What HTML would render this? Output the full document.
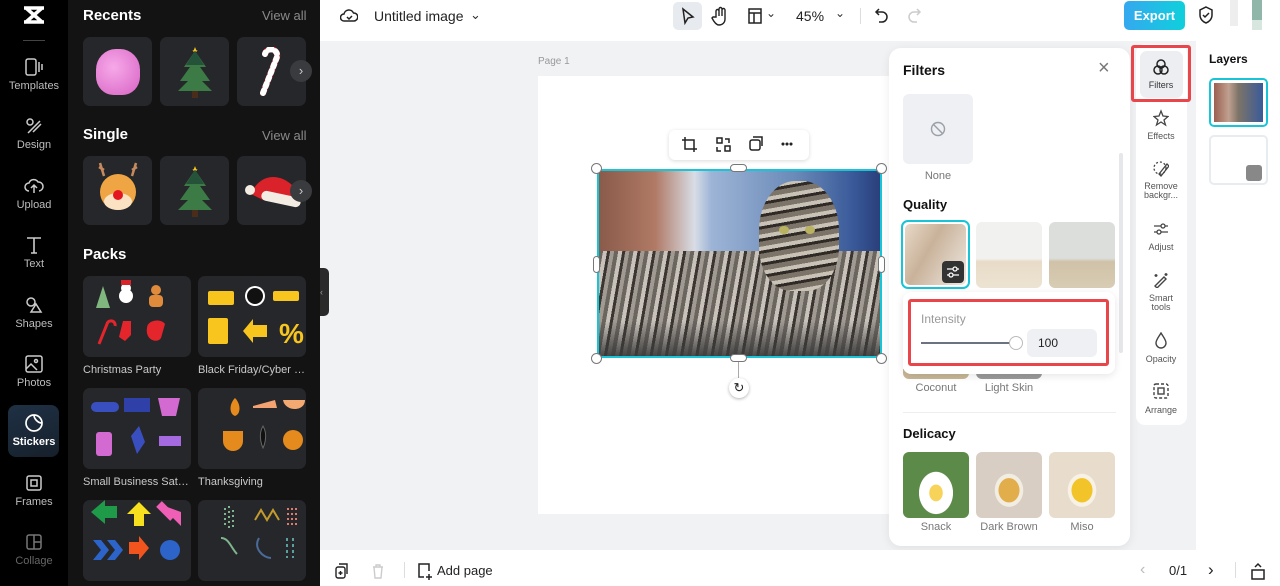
<!DOCTYPE html>
<html><head><meta charset="utf-8"><style>
*{box-sizing:border-box;margin:0;padding:0}
body{width:1280px;height:586px;overflow:hidden;position:relative;font-family:"Liberation Sans",sans-serif;background:#f1f2f4}
.a{position:absolute}
.rail{left:0;top:0;width:68px;height:586px;background:#000}
.ri{position:absolute;left:0;width:68px;text-align:center;color:#bdbdbd;font-size:11px}
.ri svg{display:block;margin:0 auto 3px}
.panel{left:68px;top:0;width:252px;height:586px;background:#131314}
.h{color:#fff;font-weight:bold;font-size:15px}
.va{color:#8a8a8a;font-size:13px}
.card{position:absolute;background:#26272a;border-radius:7px}
.lbl{position:absolute;color:#c9c9c9;font-size:11px;white-space:nowrap;width:108px;overflow:hidden;text-overflow:ellipsis}
.nb{position:absolute;width:22px;height:22px;border-radius:50%;background:#3a3b3e;color:#ccc;font-size:13px;text-align:center;line-height:21px}
.top{left:320px;top:0;width:960px;height:41px;background:#fff}
.bot{left:320px;top:550px;width:960px;height:36px;background:#fff}
.tl{position:absolute;font-size:11px;color:#555;text-align:center;width:50px}
</style></head><body>
<div class="a rail">
 <svg class="a" style="left:22px;top:5px" width="24" height="20" viewBox="0 0 24 20"><path d="M2 3h20M2 17h20M4 3l16 14M20 3L4 17" stroke="#fff" stroke-width="3.5" fill="none"/></svg>
 <div class="a" style="left:23px;top:40px;width:22px;height:1px;background:#444"></div>
 <div class="ri" style="top:57px"><svg width="20" height="20" viewBox="0 0 20 20" fill="none" stroke="#ccc" stroke-width="1.5"><rect x="2" y="2" width="10" height="16" rx="2"/><path d="M15 5v10M18 7v6"/></svg>Templates</div>
 <div class="ri" style="top:116px"><svg width="20" height="20" viewBox="0 0 20 20" fill="none" stroke="#ccc" stroke-width="1.5"><circle cx="6" cy="6" r="3"/><path d="M4 17l12-12M9 16l8-8"/></svg>Design</div>
 <div class="ri" style="top:176px"><svg width="20" height="20" viewBox="0 0 20 20" fill="none" stroke="#ccc" stroke-width="1.5"><path d="M5 15a4 4 0 010-8 5 5 0 019-1 4 4 0 011 9M10 10v7M7 12l3-3 3 3"/></svg>Upload</div>
 <div class="ri" style="top:235px"><svg width="20" height="20" viewBox="0 0 20 20" fill="none" stroke="#ccc" stroke-width="1.6"><path d="M3 3h14M10 3v15M7 18h6"/></svg>Text</div>
 <div class="ri" style="top:295px"><svg width="20" height="20" viewBox="0 0 20 20" fill="none" stroke="#ccc" stroke-width="1.5"><circle cx="7" cy="7" r="4"/><path d="M12 9l5 8H7z"/></svg>Shapes</div>
 <div class="ri" style="top:354px"><svg width="20" height="20" viewBox="0 0 20 20" fill="none" stroke="#ccc" stroke-width="1.5"><rect x="2" y="2" width="16" height="16" rx="2"/><circle cx="12" cy="7" r="1.5"/><path d="M2 15l5-5 6 6"/></svg>Photos</div>
 <div class="a" style="left:8px;top:405px;width:51px;height:52px;border-radius:8px;background:linear-gradient(160deg,#1f3145,#16202b)"></div>
 <div class="ri" style="top:413px;color:#fff;font-weight:bold"><svg width="20" height="20" viewBox="0 0 20 20" fill="none" stroke="#fff" stroke-width="1.7"><path d="M18 10a8 8 0 11-8-8c0 4 4 8 8 8zM10 2a8 8 0 018 8"/></svg>Stickers</div>
 <div class="ri" style="top:473px"><svg width="20" height="20" viewBox="0 0 20 20" fill="none" stroke="#ccc" stroke-width="1.5"><rect x="3" y="3" width="14" height="14" rx="2"/><rect x="7" y="7" width="6" height="6"/></svg>Frames</div>
 <div class="ri" style="top:532px;color:#666"><svg width="20" height="20" viewBox="0 0 20 20" fill="none" stroke="#777" stroke-width="1.5"><rect x="3" y="3" width="14" height="14" rx="2"/><path d="M10 3v14M10 10h7"/></svg>Collage</div>
</div>
<div class="a panel">
 <div class="a h" style="left:15px;top:7px">Recents</div><div class="a va" style="left:194px;top:8px">View all</div>
 <div class="card" style="left:15px;top:37px;width:69px;height:69px"><div class="a" style="left:13px;top:12px;width:44px;height:46px;border-radius:45% 45% 40% 40%;background:radial-gradient(circle at 40% 40%,#f7a9e9,#d763c4)"></div></div>
 <div class="card" style="left:92px;top:37px;width:69px;height:69px"><svg class="a" style="left:18px;top:8px" width="34" height="54" viewBox="0 0 34 54"><polygon points="17,2 19,7 14,5 20,5 15,7" fill="#f7c51e"/><path d="M17 6L6 22h6L2 36h8L0 46h34l-10-10h8L22 22h6z" fill="#3d7b46"/><path d="M17 6L8 20h18z" fill="#24533a"/><rect x="14" y="46" width="6" height="7" fill="#4a2c1a"/></svg></div>
 <div class="card" style="left:169px;top:37px;width:69px;height:69px"><svg class="a" style="left:20px;top:10px" width="30" height="50" viewBox="0 0 30 50"><path d="M6 46L20 10a6 6 0 00-12-3" stroke="#e4252c" stroke-width="6" fill="none" stroke-linecap="round"/><path d="M6 46L20 10a6 6 0 00-12-3" stroke="#fff" stroke-width="6" fill="none" stroke-dasharray="3 4" stroke-linecap="round"/></svg></div>
 <div class="nb" style="left:222px;top:60px">›</div>
 <div class="a h" style="left:15px;top:126px">Single</div><div class="a va" style="left:194px;top:128px">View all</div>
 <div class="card" style="left:15px;top:156px;width:69px;height:69px"><div class="a" style="left:17px;top:18px;width:36px;height:36px;border-radius:50%;background:#f0a545"></div><div class="a" style="left:21px;top:37px;width:28px;height:17px;border-radius:50%;background:#fbe2c2"></div><div class="a" style="left:30px;top:34px;width:10px;height:10px;border-radius:50%;background:#e4161f"></div><svg class="a" style="left:13px;top:5px" width="44" height="16"><path d="M8 15L4 2M8 9l-5-3M36 15l4-13M36 9l5-3" stroke="#c68a5e" stroke-width="2.5" fill="none"/></svg></div>
 <div class="card" style="left:92px;top:156px;width:69px;height:69px"><svg class="a" style="left:18px;top:8px" width="34" height="54" viewBox="0 0 34 54"><polygon points="17,2 19,7 14,5 20,5 15,7" fill="#f7c51e"/><path d="M17 6L6 22h6L2 36h8L0 46h34l-10-10h8L22 22h6z" fill="#3d7b46"/><path d="M17 6L8 20h18z" fill="#24533a"/><rect x="14" y="46" width="6" height="7" fill="#4a2c1a"/></svg></div>
 <div class="card" style="left:169px;top:156px;width:69px;height:69px"><svg class="a" style="left:8px;top:14px" width="58" height="40"><path d="M6 24C14 4 34 2 48 16l6 14H18z" fill="#d9222a"/><rect x="16" y="24" width="40" height="10" rx="5" fill="#f3ece3" transform="rotate(12 36 29)"/><circle cx="5" cy="20" r="5" fill="#f3ece3"/></svg></div>
 <div class="nb" style="left:222px;top:180px">›</div>
 <div class="a h" style="left:15px;top:246px">Packs</div>
 <div class="card" style="left:15px;top:276px;width:108px;height:81px"></div>
 <div class="card" style="left:130px;top:276px;width:108px;height:81px"></div>
 <div class="card" style="left:15px;top:388px;width:108px;height:81px"></div>
 <div class="card" style="left:130px;top:388px;width:108px;height:81px"></div>
 <div class="card" style="left:15px;top:500px;width:108px;height:81px"></div>
 <div class="card" style="left:130px;top:500px;width:108px;height:81px"></div>
 <svg class="a" style="left:15px;top:276px" width="223" height="305">
  <g><polygon points="20,10 13,32 27,32" fill="#7fb77e"/><circle cx="43" cy="20" r="7" fill="#fff"/><circle cx="43" cy="12" r="5" fill="#fff"/><rect x="38" y="4" width="10" height="5" fill="#d9222a"/><circle cx="73" cy="14" r="5" fill="#e08a3c"/><rect x="66" y="19" width="14" height="12" rx="4" fill="#e08a3c"/>
  <path d="M16 68l8-20a4 4 0 018 2" stroke="#e4252c" stroke-width="3" fill="none"/><path d="M40 45h8v14l-6 6-6-4z" fill="#e4252c"/><path d="M64 52c0-8 14-10 18-4l-4 14c-4 6-16 2-14-10z" fill="#e4252c"/></g>
  <g fill="#f7c51e"><rect x="125" y="15" width="26" height="14" rx="2"/><circle cx="172" cy="20" r="10" fill="#fff"/><circle cx="172" cy="20" r="8" fill="#111"/><rect x="190" y="15" width="26" height="10" rx="2"/><rect x="125" y="42" width="20" height="26" rx="2"/><path d="M160 55l10-12v6h14v12h-14v6z"/><text x="196" y="67" font-size="28" font-weight="bold" font-family="Liberation Sans">%</text></g>
  <g><rect x="8" y="126" width="28" height="10" rx="5" fill="#3a4fbf"/><rect x="41" y="122" width="26" height="14" fill="#2f40a8"/><path d="M75 122h22l-4 18H79z" fill="#d36ad1"/><rect x="13" y="156" width="16" height="24" rx="3" fill="#d36ad1"/><path d="M48 160l8-10 6 16-8 12z" fill="#3a4fbf"/><rect x="76" y="160" width="22" height="10" fill="#a66ae0"/></g>
  <g><path d="M152 122c-6 6-6 16 0 18 6-2 6-12 0-18z" fill="#e58a1c"/><path d="M170 130l22-6 2 8h-24z" fill="#f4a272"/><path d="M200 124h22c0 12-20 12-22 0z" fill="#f2a972"/><path d="M140 155h20v10a10 10 0 01-20 0z" fill="#e58a1c"/><path d="M180 150c-6 10 0 22 0 22s6-12 0-22z" fill="#111" stroke="#666"/><circle cx="210" cy="164" r="10" fill="#e58a1c"/></g>
  <g><path d="M8 236l14-12v6h12v12H22v6z" fill="#1f9a48"/><path d="M56 226l12 12h-7v12h-10v-12h-7z" fill="#f7e01e"/><path d="M76 228l22 22v-14" fill="#ef5fb6"/><path d="M76 228l14 14" stroke="#ef5fb6" stroke-width="8"/><path d="M10 264l8 10-8 10h8l8-10-8-10zM24 264l8 10-8 10h8l8-10-8-10z" fill="#2c64c9"/><path d="M46 266h10v-6l10 12-10 12v-6H46z" fill="#f2541d"/><circle cx="87" cy="274" r="10" fill="#2c64c9"/></g>
  <g stroke-width="2" fill="none"><path d="M142 232v20M146 230v22M150 234v18" stroke="#7fb48e" stroke-dasharray="2 3"/><path d="M172 244l6-10 6 10 6-10 6 10" stroke="#c49a2c"/><path d="M205 232v20M209 232v20M213 232v20" stroke="#e07a6a" stroke-dasharray="2 3"/><path d="M138 262c8 0 10 10 16 16" stroke="#7fb48e"/><path d="M176 262c-6 10 4 20 12 20" stroke="#4a6a9a"/><path d="M204 262v20M210 262v20" stroke="#5aa0a0" stroke-dasharray="3 3"/></g>
 </svg>
 <div class="lbl" style="left:15px;top:364px">Christmas Party</div>
 <div class="lbl" style="left:130px;top:364px">Black Friday/Cyber M...</div>
 <div class="lbl" style="left:15px;top:476px">Small Business Saturd...</div>
 <div class="lbl" style="left:130px;top:476px">Thanksgiving</div>
</div>
<div class="a" style="left:320px;top:268px;width:9px;height:48px;background:#2a2a2a;border-radius:0 5px 5px 0;color:#999;font-size:9px;line-height:48px">‹</div>
<div class="a top">
 <svg class="a" style="left:20px;top:7px" width="18" height="18" viewBox="0 0 18 18" fill="none" stroke="#222" stroke-width="1.5"><path d="M4 14a3.5 3.5 0 010-7 5 5 0 019.5-1 3.5 3.5 0 01.5 8z"/><path d="M7 10l2 2 3-3"/></svg>
 <div class="a" style="left:54px;top:8px;font-size:14px;color:#222">Untitled image</div>
 <div class="a" style="left:150px;top:7px;font-size:13px;color:#333">⌄</div>
 <div class="a" style="left:353px;top:2px;width:29px;height:28px;border-radius:5px;background:#e7eaee"></div>
 <svg class="a" style="left:359px;top:7px" width="16" height="18"><path d="M4 2l10 8-5 1-3 5z" fill="none" stroke="#222" stroke-width="1.5"/></svg>
 <svg class="a" style="left:391px;top:6px" width="18" height="20"><path d="M5 11V5a1.5 1.5 0 013 0v5V3a1.5 1.5 0 013 0v7V4a1.5 1.5 0 013 0v9c0 4-3 6-6 6s-5-3-7-7l1-1z" fill="none" stroke="#222" stroke-width="1.4"/></svg>
 <svg class="a" style="left:428px;top:8px" width="14" height="16"><rect x="1" y="1" width="12" height="14" fill="none" stroke="#222" stroke-width="1.5"/><path d="M1 5h12M6 5v10" stroke="#222" stroke-width="1.5"/></svg>
 <div class="a" style="left:446px;top:6px;font-size:12px;color:#333">⌄</div>
 <div class="a" style="left:476px;top:8px;font-size:14px;color:#222">45%</div>
 <div class="a" style="left:515px;top:6px;font-size:12px;color:#333">⌄</div>
 <div class="a" style="left:540px;top:8px;width:1px;height:16px;background:#ddd"></div>
 <svg class="a" style="left:554px;top:7px" width="16" height="18"><path d="M5 2L2 5l3 3M2 5h6a5 5 0 010 10H5" fill="none" stroke="#222" stroke-width="1.5"/></svg>
 <svg class="a" style="left:586px;top:7px" width="16" height="18"><path d="M11 2l3 3-3 3M14 5H8a5 5 0 000 10h3" fill="none" stroke="#ccc" stroke-width="1.5"/></svg>
 <div class="a" style="left:804px;top:1px;width:61px;height:29px;border-radius:5px;background:linear-gradient(90deg,#35a8ef,#0fd0dc);color:#fff;font-weight:bold;font-size:13px;text-align:center;line-height:29px">Export</div>
 <svg class="a" style="left:878px;top:6px" width="16" height="18"><path d="M8 1l6 3v5c0 4-3 7-6 8-3-1-6-4-6-8V4z M5 9l2 2 4-4" fill="none" stroke="#222" stroke-width="1.5"/></svg>
 <div class="a" style="left:910px;top:0;width:8px;height:26px;background:#eee"></div>
 <div class="a" style="left:932px;top:0;width:10px;height:20px;background:#8fb6a8"></div>
 <div class="a" style="left:932px;top:20px;width:10px;height:10px;background:#d8e6e0"></div>
</div>
<div class="a" style="left:538px;top:56px;font-size:10px;color:#999">Page 1</div>
<div class="a" style="left:538px;top:76px;width:360px;height:438px;background:#fff"></div>
<div class="a" style="left:669px;top:130px;width:140px;height:30px;background:#fff;border-radius:6px;box-shadow:0 1px 4px rgba(0,0,0,.15)"></div>
<svg class="a" style="left:681px;top:136px" width="120" height="18" fill="none" stroke="#222" stroke-width="1.5"><path d="M4 1v12h12M1 4h12v12"/><rect x="36" y="2" width="5" height="5"/><rect x="44" y="10" width="5" height="5"/><path d="M44 3h4v4M36 11v4h4"/><rect x="69" y="4" width="10" height="10" rx="2"/><path d="M72 1h9v9"/><circle cx="102" cy="8" r=".8" fill="#222"/><circle cx="106" cy="8" r=".8" fill="#222"/><circle cx="110" cy="8" r=".8" fill="#222"/></svg>
<div class="a" style="left:597px;top:169px;width:285px;height:189px;border:2px solid #19c4d6;overflow:hidden;background:linear-gradient(90deg,#8a5a4a 0%,#b07a65 20%,#d8dde6 34%,#9db4d6 40%,#6a8ab8 70%,#3a5a9a 90%,#2a3f7a 100%)">
 <div class="a" style="left:0;top:80px;width:285px;height:109px;background:repeating-linear-gradient(100deg,#6b6560 0 4px,#c8c2ba 4px 8px,#3a3530 8px 11px,#a09a92 11px 15px)"></div>
 <div class="a" style="left:0;top:150px;width:285px;height:39px;background:linear-gradient(#0000,#3b3b3b)"></div>
 <div class="a" style="left:160px;top:10px;width:80px;height:110px;border-radius:45% 45% 40% 40%;background:repeating-linear-gradient(170deg,#7c7468 0 5px,#c9c2b6 5px 9px,#2f2a25 9px 12px)"></div>
 <div class="a" style="left:180px;top:55px;width:10px;height:8px;border-radius:50%;background:#b9b260"></div>
 <div class="a" style="left:206px;top:55px;width:10px;height:8px;border-radius:50%;background:#b9b260"></div>
</div>
<div class="a" style="left:591px;top:163px;width:11px;height:11px;border-radius:50%;background:#fff;border:1px solid #777"></div>
<div class="a" style="left:876px;top:163px;width:11px;height:11px;border-radius:50%;background:#fff;border:1px solid #777"></div>
<div class="a" style="left:591px;top:353px;width:11px;height:11px;border-radius:50%;background:#fff;border:1px solid #777"></div>
<div class="a" style="left:876px;top:353px;width:11px;height:11px;border-radius:50%;background:#fff;border:1px solid #777"></div>
<div class="a" style="left:730px;top:164px;width:17px;height:8px;border-radius:4px;background:#fff;border:1px solid #777"></div>
<div class="a" style="left:730px;top:354px;width:17px;height:8px;border-radius:4px;background:#fff;border:1px solid #777"></div>
<div class="a" style="left:593px;top:256px;width:7px;height:17px;border-radius:4px;background:#fff;border:1px solid #777"></div>
<div class="a" style="left:878px;top:256px;width:7px;height:17px;border-radius:4px;background:#fff;border:1px solid #777"></div>
<div class="a" style="left:738px;top:362px;width:1px;height:16px;background:#aaa"></div>
<div class="a" style="left:729px;top:378px;width:20px;height:20px;border-radius:50%;background:#fff;box-shadow:0 1px 3px rgba(0,0,0,.3);text-align:center;font-size:13px;line-height:20px;color:#222">↻</div>

<div class="a" style="left:889px;top:48px;width:241px;height:498px;background:#fff;border-radius:12px;box-shadow:0 2px 10px rgba(0,0,0,.08);overflow:hidden">
 <div class="a" style="left:14px;top:14px;font-weight:bold;font-size:14px;color:#111">Filters</div>
 <div class="a" style="left:209px;top:9px;font-size:20px;color:#777;font-weight:300">×</div>
 <div class="a" style="left:14px;top:46px;width:70px;height:70px;border-radius:6px;background:#eef0f3"></div>
 <svg class="a" style="left:41px;top:73px" width="16" height="16"><circle cx="8" cy="8" r="6.5" fill="none" stroke="#9aa0a8" stroke-width="1.4"/><path d="M3.5 3.5l9 9" stroke="#9aa0a8" stroke-width="1.4"/></svg>
 <div class="a" style="left:14px;top:122px;width:70px;text-align:center;font-size:11px;color:#777">None</div>
 <div class="a" style="left:14px;top:149px;font-size:13px;color:#111;font-weight:bold">Quality</div>
 <div class="a" style="left:12px;top:172px;width:69px;height:69px;border:2px solid #19c4d6;border-radius:7px;padding:2px"><div style="width:100%;height:100%;border-radius:5px;background:linear-gradient(120deg,#e8d9c8,#c9b29a 40%,#efe9e2)"></div></div>
 <div class="a" style="left:53px;top:213px;width:22px;height:22px;border-radius:4px;background:#333"></div>
 <svg class="a" style="left:57px;top:217px" width="14" height="14" stroke="#fff" stroke-width="1.3" fill="none"><path d="M1 4h12M1 10h12"/><circle cx="9" cy="4" r="2" fill="#333"/><circle cx="5" cy="10" r="2" fill="#333"/></svg>
 <div class="a" style="left:87px;top:174px;width:66px;height:66px;border-radius:6px;background:linear-gradient(#f1f1ef 55%,#e8dcc8 60%,#ede3d2)"></div>
 <div class="a" style="left:160px;top:174px;width:66px;height:66px;border-radius:6px;background:linear-gradient(#dcdedc 55%,#cfc2a8 60%,#d8ccb4)"></div>
 <div class="a" style="left:230px;top:105px;width:4px;height:200px;border-radius:2px;background:#e5e7ea"></div>
 <div class="a" style="left:14px;top:321px;width:66px;height:10px;border-radius:0 0 6px 6px;background:#c8b796"></div>
 <div class="a" style="left:87px;top:321px;width:66px;height:10px;border-radius:0 0 6px 6px;background:#9a9a9a"></div>
 <div class="a" style="left:14px;top:334px;width:66px;text-align:center;font-size:11px;color:#777">Coconut</div>
 <div class="a" style="left:87px;top:334px;width:66px;text-align:center;font-size:11px;color:#777">Light Skin</div>
 <div class="a" style="left:14px;top:364px;width:213px;height:1px;background:#eceef0"></div>
 <div class="a" style="left:14px;top:378px;font-size:13px;color:#111;font-weight:bold">Delicacy</div>
 <div class="a" style="left:14px;top:404px;width:66px;height:66px;border-radius:6px;background:radial-gradient(ellipse at 50% 62%,#f7d35a 0 14%,#fff 15% 36%,#5c8a48 37%) ,#ddd"></div>
 <div class="a" style="left:87px;top:404px;width:66px;height:66px;border-radius:6px;background:radial-gradient(ellipse at 50% 58%,#e2ae4c 0 22%,#f2ede2 23% 30%,#d8cec4 31%)"></div>
 <div class="a" style="left:160px;top:404px;width:66px;height:66px;border-radius:6px;background:radial-gradient(ellipse at 50% 58%,#f2c42a 0 22%,#f7f2e5 23% 30%,#e8dccc 31%)"></div>
 <div class="a" style="left:14px;top:473px;width:66px;text-align:center;font-size:11px;color:#777">Snack</div>
 <div class="a" style="left:87px;top:473px;width:66px;text-align:center;font-size:11px;color:#777">Dark Brown</div>
 <div class="a" style="left:160px;top:473px;width:66px;text-align:center;font-size:11px;color:#777">Miso</div>
</div>
<div class="a" style="left:903px;top:292px;width:212px;height:82px;background:#fff;border-radius:8px;box-shadow:0 2px 8px rgba(0,0,0,.1)"></div>
<div class="a" style="left:908px;top:299px;width:201px;height:67px;border:3px solid #e8464a;border-radius:3px"></div>
<div class="a" style="left:921px;top:312px;font-size:12px;color:#999">Intensity</div>
<div class="a" style="left:921px;top:342px;width:95px;height:2px;background:#6b7280"></div>
<div class="a" style="left:1009px;top:336px;width:14px;height:14px;border-radius:50%;background:#fff;border:1px solid #bbb"></div>
<div class="a" style="left:1027px;top:329px;width:70px;height:28px;border-radius:6px;background:#eef0f3;font-size:12px;color:#222;line-height:28px;padding-left:11px">100</div>

<div class="a" style="left:1136px;top:44px;width:51px;height:381px;background:#fff;border-radius:9px"></div>
<div class="a" style="left:1140px;top:51px;width:43px;height:47px;border-radius:7px;background:#eceef1"></div>
<div class="a" style="left:1131px;top:45px;width:60px;height:57px;border:3px solid #e8464a;border-radius:3px"></div>
<svg class="a" style="left:1152px;top:58px" width="18" height="18" fill="none" stroke="#222" stroke-width="1.5"><circle cx="9" cy="6" r="4"/><circle cx="6" cy="12" r="4"/><circle cx="12" cy="12" r="4"/></svg>
<div class="tl" style="left:1136px;top:80px;color:#333;font-size:9px">Filters</div>
<svg class="a" style="left:1153px;top:109px" width="16" height="18" fill="none" stroke="#444" stroke-width="1.3"><path d="M8 2l2 5 5 .5-4 3.5 1.5 5L8 13l-4.5 3L5 11 1 7.5 6 7z"/></svg>
<div class="tl" style="left:1136px;top:131px;font-size:9px">Effects</div>
<svg class="a" style="left:1153px;top:160px" width="16" height="18" fill="none" stroke="#444" stroke-width="1.3"><circle cx="7" cy="8" r="6" stroke-dasharray="2 2"/><path d="M6 14l8-10 2 2-8 10z"/></svg>
<div class="tl" style="left:1136px;top:182px;font-size:9px;line-height:9px">Remove<br>backgr...</div>
<svg class="a" style="left:1153px;top:221px" width="16" height="16" fill="none" stroke="#444" stroke-width="1.3"><path d="M1 5h14M1 11h14"/><circle cx="10" cy="5" r="2" fill="#fff"/><circle cx="6" cy="11" r="2" fill="#fff"/></svg>
<div class="tl" style="left:1136px;top:242px;font-size:9px">Adjust</div>
<svg class="a" style="left:1153px;top:272px" width="16" height="16" fill="none" stroke="#444" stroke-width="1.4"><path d="M2 14l9-9 2 2-9 9zM3 2v3M1.5 3.5h3M13 1v3M11.5 2.5h3"/></svg>
<div class="tl" style="left:1136px;top:294px;font-size:9px;line-height:9px">Smart<br>tools</div>
<svg class="a" style="left:1154px;top:332px" width="14" height="17" fill="none" stroke="#444" stroke-width="1.4"><path d="M7 1C4 6 2 8 2 11a5 5 0 0010 0c0-3-2-5-5-10z"/></svg>
<div class="tl" style="left:1136px;top:354px;font-size:9px">Opacity</div>
<svg class="a" style="left:1153px;top:383px" width="16" height="16" fill="none" stroke="#444" stroke-width="1.4"><rect x="1" y="1" width="14" height="14" rx="2" stroke-dasharray="3 2"/><rect x="5" y="5" width="6" height="6"/></svg>
<div class="tl" style="left:1136px;top:405px;font-size:9px">Arrange</div>

<div class="a" style="left:1196px;top:41px;width:84px;height:509px;background:#fff"></div>
<div class="a" style="left:1209px;top:52px;font-weight:bold;font-size:12px;color:#111">Layers</div>
<div class="a" style="left:1209px;top:78px;width:59px;height:49px;border:2px solid #19c4d6;border-radius:5px;padding:3px"><div style="width:100%;height:100%;background:linear-gradient(90deg,#9a6050,#c0a090 30%,#7c7468 50%,#3a5a9a)"></div></div>
<div class="a" style="left:1209px;top:135px;width:59px;height:50px;border:2px solid #e6ecf0;border-radius:5px;background:#fff"></div>
<div class="a" style="left:1246px;top:165px;width:16px;height:16px;border-radius:3px;background:#888"></div>

<div class="a bot">
 <svg class="a" style="left:15px;top:13px" width="14" height="16" fill="none" stroke="#222" stroke-width="1.4"><rect x="1" y="4" width="9" height="11" rx="2"/><path d="M4 1h8v10M5.5 8v4M3.5 10h4"/></svg>
 <svg class="a" style="left:51px;top:13px" width="14" height="16" fill="none" stroke="#ccc" stroke-width="1.4"><path d="M2 4h10M5 4V2h4v2M3 4l1 11h6l1-11"/></svg>
 <div class="a" style="left:84px;top:12px;width:1px;height:16px;background:#ddd"></div>
 <svg class="a" style="left:96px;top:12px" width="18" height="18" fill="none" stroke="#222" stroke-width="1.5"><path d="M8 15H3V2h10v7M13 12v6M10 15h6"/></svg>
 <div class="a" style="left:117px;top:13px;font-size:13px;color:#222">Add page</div>
 <div class="a" style="left:820px;top:11px;font-size:16px;color:#bbb">‹</div>
 <div class="a" style="left:849px;top:13px;font-size:13px;color:#222">0/1</div>
 <div class="a" style="left:888px;top:10px;font-size:17px;color:#222">›</div>
 <div class="a" style="left:915px;top:12px;width:1px;height:16px;background:#ddd"></div>
 <svg class="a" style="left:931px;top:12px" width="14" height="18" fill="none" stroke="#222" stroke-width="1.5"><rect x="1" y="8" width="12" height="9"/><path d="M4 5l3-3 3 3"/></svg>
</div>
</body></html>
